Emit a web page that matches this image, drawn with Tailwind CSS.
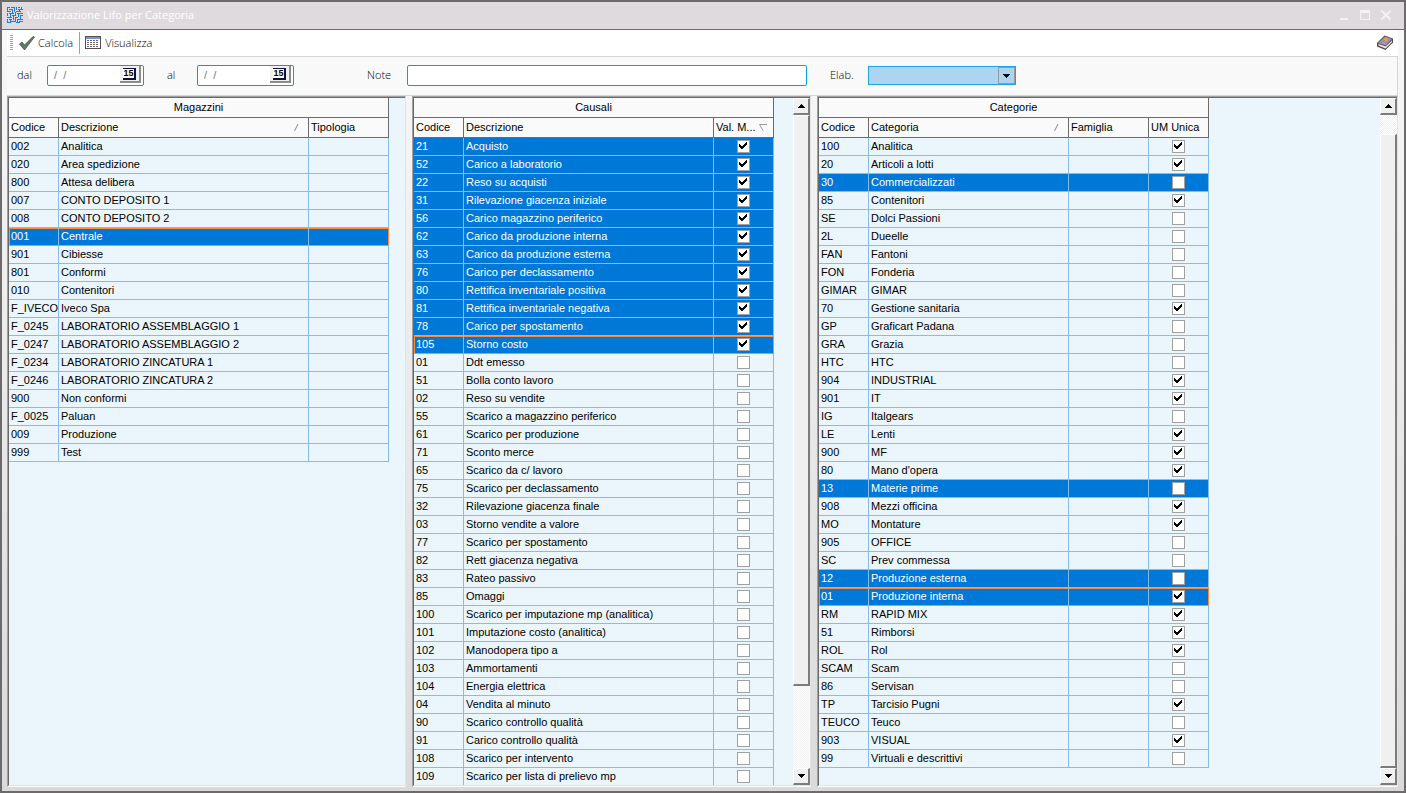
<!DOCTYPE html>
<html lang="it">
<head>
<meta charset="utf-8">
<title>Valorizzazione Lifo per Categoria</title>
<script src="https://cdn.jsdelivr.net/npm/@tailwindcss/browser@4"></script>
</head>
<body class="h-screen font-['Liberation_Sans',Arial,sans-serif] text-[11px] text-black">
<div class="flex h-screen flex-col border-2 border-[#6c6a6b] bg-linear-to-b from-[#f9f9f9] to-[#dadada]">

  <header class="flex h-7 shrink-0 items-center border-b border-[#6c6a6b] bg-[#dfdadd] pb-px pl-[5px] pr-3 font-['Open_Sans','Noto_Sans',sans-serif] text-[11px] text-white">
    <svg class="size-4" viewBox="0 0 16 16" fill="none" stroke="#0a84e8" shape-rendering="crispEdges">
      <path d="M0 .5h3M4 .5h4M9.500 0v3M11 .5h2M14.500 0v3M.5 1v3M2 2.500h4M7.500 1v4M11 2.500h5M0 4.500h4M5.500 3v3M9 4.500h5M12.500 2v3M.5 6v3M2 6.500h5M8.500 5v4M10 6.500h6M3.500 7v3M5 8.500h3M11.500 7v3M13 8.500h3M0 10.500h5M6.500 9v4M8 10.500h3M13.500 9v3M.5 12v4M2 12.500h3M8.500 11v4M10 12.500h6M3.500 13v3M4 14.500h4M10.500 13v2M12 14.500h4M0 15.500h3M9 15.500h4"/>
    </svg>
    <h1 class="ml-1 grow">Valorizzazione Lifo per Categoria</h1>
    <div class="flex items-center gap-[9px]">
      <button aria-label="Riduci"><svg class="size-3" viewBox="0 0 12 12"><path d="M2 9h8v2H2z" fill="#f4f2f3"/></svg></button>
      <button aria-label="Ingrandisci"><svg class="size-3" viewBox="0 0 12 12"><path d="M1 1h10v10H1zM2 4v6h8V4z" fill="#f4f2f3" fill-rule="evenodd"/></svg></button>
      <button aria-label="Chiudi"><svg class="size-3" viewBox="0 0 12 12"><path d="M1.500 1.500l9 9M10.500 1.500l-9 9" stroke="#f4f2f3" stroke-width="2"/></svg></button>
    </div>
  </header>

  <main class="flex min-h-0 grow flex-col pl-[5px] pr-[6px] pb-1">
    <nav class="flex h-[27px] shrink-0 items-center border-b border-[#d6d6d6] bg-white pl-[3px] font-['Open_Sans','Noto_Sans',sans-serif]">
      <span class="h-4 w-[3px] bg-[repeating-linear-gradient(#a3a3a3_0_1px,#fff_1px_2px)]"></span>
      <button class="ml-[6px] flex items-center gap-[3px]">
        <svg class="size-4" viewBox="0 0 16 16"><path d="M.5 9L3 7l2.500 3L14 1.500l1.500.5L7 13l-1.500 2z" fill="#5f7d62" stroke="#39443f" stroke-width=".7"/></svg>
        <span class="font-light">Calcola</span>
      </button>
      <span class="ml-[6px] h-[22px] w-px bg-[#a0a0a0]"></span>
      <button class="ml-[5px] flex items-center gap-1">
        <svg class="size-4" viewBox="0 0 16 16" shape-rendering="crispEdges"><path d="M0 1h16v13H0z" fill="#5c4c50"/><path d="M1 4h14v9H1z" fill="#fff"/><path d="M1 2h14v2H1z" fill="#6c96ee"/><path d="M2 5.500h12M2 7.500h12M2 9.500h12M2 11.500h12" stroke="#6c6670" stroke-dasharray="2 1"/></svg>
        <span class="font-light">Visualizza</span>
      </button>
      <button class="ml-auto mr-[5px]" aria-label="Guida">
        <svg class="size-4" viewBox="0 0 16 16"><path d="M0 8l7.500-7.500L16 3.500v4L8.500 15 0 11.500z" fill="#5a4648"/><path d="M1.500 10.500l7 3 6.500-6.500v-1.500l-6.500 6-7-2.500z" fill="#f4f0ea"/><path d="M1 8L8 1.500l7 2.500-6.500 6.500z" fill="#9a92b2"/><path d="M7 4.500c2-1.800 4.500-.8 3 .8L8 6.500M7 8v1" stroke="#f0a040" stroke-width="1.300" fill="none"/></svg>
      </button>
    </nav>

    <form class="flex h-[39px] shrink-0 items-center border-b border-r border-[#d6d6d6] bg-[#f9f9f9] pb-px pl-[10px] font-['Open_Sans','Noto_Sans',sans-serif] font-light">
      <label for="dal" class="w-[30px]">dal</label>
      <div class="flex h-[21px] w-[97px] items-start rounded-xs border border-[#00a2d8] bg-white pr-[2px]">
        <input id="dal" value="/  /" class="h-[18px] w-0 min-w-0 grow pl-1.5 font-['Liberation_Sans',Arial,sans-serif] font-normal whitespace-pre text-[#777] outline-none">
        <button type="button" aria-label="Calendario dal" class="flex h-[17px] w-[21px] shrink-0 items-center justify-center border-b-2 border-r-2 border-[#8c8c8c] bg-[#f0f0f0]"><span class="h-3 w-[13px] shrink-0 border-b-2 border-r-2 border-t border-[#101040] bg-white text-[9px] leading-[9px] font-bold font-['Liberation_Sans',Arial,sans-serif]">15</span></button>
      </div>
      <label for="al" class="w-[53px] pl-[23px]">al</label>
      <div class="flex h-[21px] w-[97px] items-start rounded-xs border border-[#00a2d8] bg-white pr-[2px]">
        <input id="al" value="/  /" class="h-[18px] w-0 min-w-0 grow pl-1.5 font-['Liberation_Sans',Arial,sans-serif] font-normal whitespace-pre text-[#777] outline-none">
        <button type="button" aria-label="Calendario al" class="flex h-[17px] w-[21px] shrink-0 items-center justify-center border-b-2 border-r-2 border-[#8c8c8c] bg-[#f0f0f0]"><span class="h-3 w-[13px] shrink-0 border-b-2 border-r-2 border-t border-[#101040] bg-white text-[9px] leading-[9px] font-bold font-['Liberation_Sans',Arial,sans-serif]">15</span></button>
      </div>
      <label for="note" class="w-[113px] pl-[73px]">Note</label>
      <input id="note" class="h-[21px] w-[400px] rounded-xs border border-[#00a2d8] bg-white px-1 outline-none">
      <label for="elab" class="w-[61px] pl-[23px]">Elab.</label>
      <div class="grid w-[148px]">
        <select id="elab" class="col-start-1 row-start-1 h-[19px] appearance-none border border-[#1ba6dc] bg-[#add4f0] outline-none"><option></option></select>
        <span class="pointer-events-none col-start-1 row-start-1 mr-px flex h-[17px] w-[17px] items-center justify-center self-center justify-self-end border border-[#999] bg-[#add4f0]"><svg class="h-1 w-[7px]" viewBox="0 0 7 4" shape-rendering="crispEdges"><path d="M0 0h7L3.500 4z"/></svg></span>
      </div>
    </form>

    <div class="flex min-h-0 grow gap-[6px]">
      <section id="magazzini" class="flex w-[399px] shrink-0 border border-b-white border-l-[#a0a0a0] border-r-[#e3e3e3] border-t-[#a0a0a0]"></section>
      <section id="causali" class="flex w-[399px] shrink-0 border border-b-white border-l-[#a0a0a0] border-r-[#e3e3e3] border-t-[#a0a0a0]"></section>
      <section id="categorie" class="flex min-w-0 grow border border-b-white border-l-[#a0a0a0] border-r-[#e3e3e3] border-t-[#a0a0a0]"></section>
    </div>
  </main>
</div>

<script>
// Each line: code | name | flags (S = selected, F = selected with focus, C = checked)
const magazzini = `002|Analitica
020|Area spedizione
800|Attesa delibera
007|CONTO DEPOSITO 1
008|CONTO DEPOSITO 2
001|Centrale|F
901|Cibiesse
801|Conformi
010|Contenitori
F_IVECO|Iveco Spa
F_0245|LABORATORIO ASSEMBLAGGIO 1
F_0247|LABORATORIO ASSEMBLAGGIO 2
F_0234|LABORATORIO ZINCATURA 1
F_0246|LABORATORIO ZINCATURA 2
900|Non conformi
F_0025|Paluan
009|Produzione
999|Test`;
const causali = `21|Acquisto|SC
52|Carico a laboratorio|SC
22|Reso su acquisti|SC
31|Rilevazione giacenza iniziale|SC
56|Carico magazzino periferico|SC
62|Carico da produzione interna|SC
63|Carico da produzione esterna|SC
76|Carico per declassamento|SC
80|Rettifica inventariale positiva|SC
81|Rettifica inventariale negativa|SC
78|Carico per spostamento|SC
105|Storno costo|FC
01|Ddt emesso
51|Bolla conto lavoro
02|Reso su vendite
55|Scarico a magazzino periferico
61|Scarico per produzione
71|Sconto merce
65|Scarico da c/ lavoro
75|Scarico per declassamento
32|Rilevazione giacenza finale
03|Storno vendite a valore
77|Scarico per spostamento
82|Rett giacenza negativa
83|Rateo passivo
85|Omaggi
100|Scarico per imputazione mp (analitica)
101|Imputazione costo (analitica)
102|Manodopera tipo a
103|Ammortamenti
104|Energia elettrica
04|Vendita al minuto
90|Scarico controllo qualità
91|Carico controllo qualità
108|Scarico per intervento
109|Scarico per lista di prelievo mp`;
const categorie = `100|Analitica|C
20|Articoli a lotti|C
30|Commercializzati|S
85|Contenitori|C
SE|Dolci Passioni
2L|Dueelle
FAN|Fantoni
FON|Fonderia
GIMAR|GIMAR
70|Gestione sanitaria|C
GP|Graficart Padana
GRA|Grazia
HTC|HTC
904|INDUSTRIAL|C
901|IT|C
IG|Italgears
LE|Lenti|C
900|MF|C
80|Mano d'opera|C
13|Materie prime|S
908|Mezzi officina|C
MO|Montature|C
905|OFFICE
SC|Prev commessa
12|Produzione esterna|S
01|Produzione interna|FC
RM|RAPID MIX|C
51|Rimborsi|C
ROL|Rol|C
SCAM|Scam
86|Servisan
TP|Tarcisio Pugni|C
TEUCO|Teuco
903|VISUAL|C
99|Virtuali e descrittivi`;

const slash = '<svg class="mr-[9px] h-[7px] w-[5px]" viewBox="0 0 5 7"><path d="M.5 7L4 0" stroke="#888" fill="none"/></svg>';
const funnel = '<svg class="mr-[6px] h-[7px] w-2" viewBox="0 0 8 7"><path d="M8 .5H.5L4 6.500" stroke="#999" fill="none"/></svg>';
const mark = '<svg class="pointer-events-none col-start-1 row-start-1 ml-[2px] mt-[2px] h-[7px] w-2" viewBox="0 0 8 7" shape-rendering="crispEdges"><path d="M0 2h1v1h1v1h2v-1h1v-1h1v-1h1v-1h1v3h-1v1h-1v1h-1v1h-1v1h-2v-1h-1v-1h-1z"/></svg>';

// Cell border colours: plain grid lines, or the orange frame of the focused row
const line = 'border-b-[#84bde6] border-r-[#84bde6]';
const focusFirst = 'border-b-[#ff8a3c] border-r-[#84bde6] shadow-[inset_1px_1px_#ff8a3c]';
const focusMid = 'border-b-[#ff8a3c] border-r-[#84bde6] shadow-[inset_0_1px_#ff8a3c]';
const focusLast = 'border-b-[#ff8a3c] border-r-[#ff8a3c] shadow-[inset_0_1px_#ff8a3c]';

function cell(content, edge) {
  return `<td class="h-[18px] overflow-hidden border-b border-r p-0 pl-[2px] align-top leading-4 whitespace-nowrap ${edge}">${content}</td>`;
}
function box(name, on, edge) {
  return `<td class="h-[18px] border-b border-r p-0 align-middle ${edge}"><label class="mx-auto grid size-[13px]"><input type="checkbox" aria-label="${name}" ${on ? 'checked' : ''} class="col-start-1 row-start-1 size-[13px] appearance-none border border-[#a0a0a0] bg-white">${on ? mark : ''}</label></td>`;
}
function arrow(up) {
  return `<button aria-label="${up ? 'Su' : 'Giù'}" class="flex h-[17px] w-[17px] shrink-0 items-center justify-center border-b-2 border-r-2 border-b-[#7c7c7c] border-r-[#7c7c7c] border-l border-t border-l-white border-t-white bg-[#f0f0f0]"><svg class="h-1 w-[7px]" viewBox="0 0 7 4" shape-rendering="crispEdges"><path d="${up ? 'M0 4h7L3.500 0z' : 'M0 0h7L3.500 4z'}"/></svg></button>`;
}
function scroll(spaceClass) {
  const track = 'bg-[repeating-conic-gradient(#f0f0f0_0_25%,#fff_0_50%)] bg-[length:2px_2px]';
  return `<div class="flex w-[17px] shrink-0 flex-col ${track}">${arrow(true)}<div class="grow ${spaceClass}"><div class="h-full border-b-2 border-r-2 border-b-[#7c7c7c] border-r-[#7c7c7c] border-l border-t border-l-white border-t-white bg-[#f0f0f0]"></div></div>${arrow(false)}</div>`;
}
function build(id, title, tableClass, cols, data, hasBox, bar) {
  const head = cols.map(c => `<th class="h-5 border-b border-r border-[#6c6a6b] bg-[#fafafa] p-0 pl-[2px] font-normal"><div class="flex items-center justify-between whitespace-nowrap"><span>${c[0]}</span>${c[2] || ''}</div></th>`).join('');
  const rows = data.split('\n').map(entry => {
    const [code, name, flags = ''] = entry.split('|');
    const focus = flags.includes('F');
    const endEdge = focus ? focusLast : line;
    const midEdge = focus ? focusMid : line;
    const last = hasBox ? box(name, flags.includes('C'), endEdge) : cell('', endEdge);
    const middle = cols.length === 4 ? cell('', midEdge) : '';
    const tone = focus || flags.includes('S') ? 'bg-[#0078d7] text-white' : '';
    return `<tr class="${tone}">${cell(code, focus ? focusFirst : line)}${cell(name, midEdge)}${middle}${last}</tr>`;
  }).join('');
  document.getElementById(id).innerHTML = `<div class="flex min-w-0 grow border-b border-l border-t border-b-[#e3e3e3] border-l-[#696969] border-t-[#696969] bg-[#eaf5fc]"><div class="min-w-0 grow overflow-hidden"><table class="${tableClass} table-fixed border-separate border-spacing-0 text-left"><colgroup>${cols.map(c => `<col class="${c[1]}">`).join('')}</colgroup><thead><tr><th colspan="${cols.length}" class="h-5 border-b border-r border-[#6c6a6b] bg-[#fafafa] p-0 text-center font-normal">${title}</th></tr><tr>${head}</tr></thead><tbody>${rows}</tbody></table></div>${bar}</div>`;
}
build('magazzini', 'Magazzini', 'w-[380px]', [['Codice', 'w-[50px]'], ['Descrizione', 'w-[250px]', slash], ['Tipologia', 'w-[80px]']], magazzini, false, '');
build('causali', 'Causali', 'w-[360px]', [['Codice', 'w-[50px]'], ['Descrizione', 'w-[250px]'], ['Val. M...', 'w-[60px]', funnel]], causali, true, scroll('mb-[82px]'));
build('categorie', 'Categorie', 'w-[390px]', [['Codice', 'w-[50px]'], ['Categoria', 'w-[200px]', slash], ['Famiglia', 'w-[80px]'], ['UM Unica', 'w-[60px]']], categorie, true, scroll('mt-[19px]'));
</script>
</body>
</html>
